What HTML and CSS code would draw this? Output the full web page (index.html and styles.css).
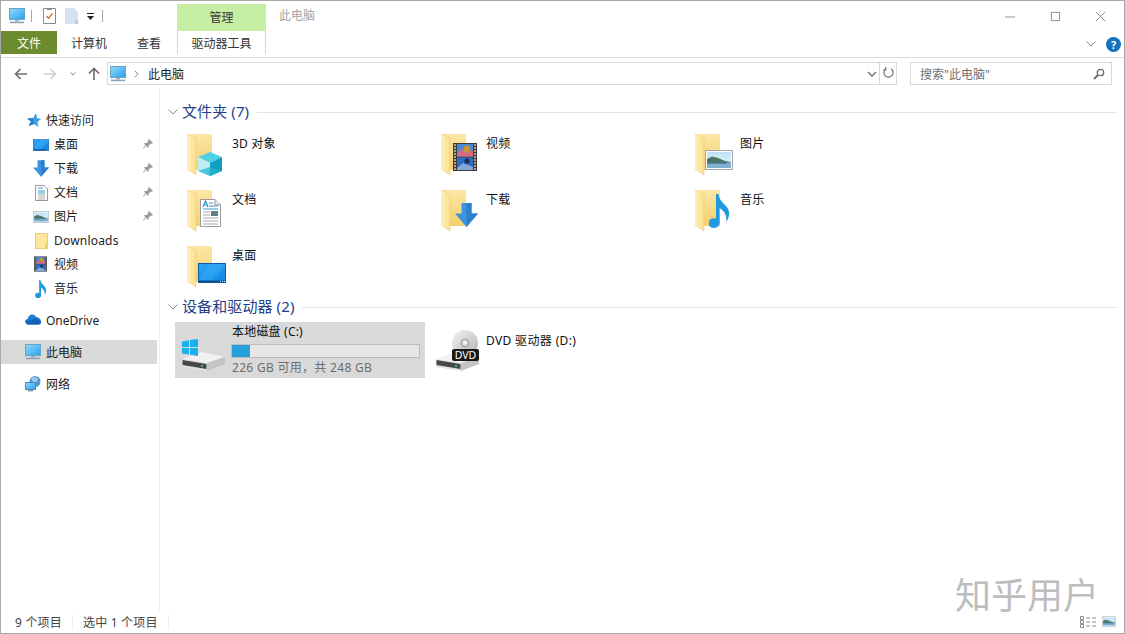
FILE: index.html
```html
<!DOCTYPE html>
<html lang="zh-CN">
<head>
<meta charset="utf-8">
<title>此电脑</title>
<link rel="stylesheet" href="styles.css">
</head>
<body>
<svg class="sprite" aria-hidden="true">
  <defs>
    <linearGradient id="gScreen" x1="0" y1="0" x2="1" y2="1"><stop offset="0" stop-color="#8fdcff"/><stop offset="1" stop-color="#2aa0ea"/></linearGradient>
    <linearGradient id="gDesk" x1="0" y1="0" x2="1" y2="1"><stop offset="0" stop-color="#2aa4f8"/><stop offset="1" stop-color="#0f86e0"/></linearGradient>
    <linearGradient id="gBack" x1="0" y1="0" x2="0" y2="1"><stop offset="0" stop-color="#fbe7a6"/><stop offset="1" stop-color="#f5cf6d"/></linearGradient>
    <linearGradient id="gFront" x1="0" y1="0" x2="1" y2="0"><stop offset="0" stop-color="#fff0b8"/><stop offset="1" stop-color="#fbe08e"/></linearGradient>
    <linearGradient id="gSky" x1="0" y1="0" x2="0" y2="1"><stop offset="0" stop-color="#bfe2f4"/><stop offset="1" stop-color="#e7f4fa"/></linearGradient>
    <linearGradient id="gDisc" x1="0" y1="0" x2="1" y2="1"><stop offset="0" stop-color="#f4f4f4"/><stop offset="1" stop-color="#b5b5b5"/></linearGradient>

    <symbol id="pc" viewBox="0 0 16 16">
      <rect x="0.5" y="0.5" width="15" height="11" fill="url(#gScreen)" stroke="#6aa3c4"/>
      <rect x="6" y="12" width="4" height="1.4" fill="#9ab4c4"/>
      <rect x="1" y="13.6" width="14" height="1.6" fill="#8aa2b2"/>
    </symbol>
    <symbol id="folder" viewBox="0 0 26 41">
      <rect x="0" y="0" width="25" height="36" fill="url(#gBack)"/>
      <path d="M0 0 L9 4 V41 L3 37 H0 Z" fill="url(#gFront)"/>
      <path d="M0 0 L9 4 V41 L3 37" fill="none" stroke="#eccb7a" stroke-width="0.6"/>
    </symbol>
    <symbol id="smallfolder" viewBox="0 0 13 16">
      <rect x="0.5" y="0.5" width="12" height="15" fill="#fde79c" stroke="#e8cb7c"/>
      <rect x="10" y="10" width="2.5" height="5.5" fill="#f5d06f"/>
    </symbol>
    <symbol id="cube" viewBox="0 0 24 24">
      <path d="M12 0 L24 5 L12 11 L0 5 Z" fill="#4fd1e4"/>
      <path d="M0 5 L12 11 V24 L0 19 Z" fill="#bdeef3"/>
      <path d="M12 11 L24 5 V19 L12 24 Z" fill="#0f9dc0"/>
      <path d="M0 19 L12 15 L24 19 L12 24 Z" fill="#29b3cf" opacity=".75"/>
    </symbol>
    <symbol id="doc" viewBox="0 0 21 28">
      <path d="M0.5 0.5 H15 L20.5 6 V27.5 H0.5 Z" fill="#fff" stroke="#9a9a9a"/>
      <path d="M15 0.5 V6 H20.5" fill="#e6e6e6" stroke="#9a9a9a"/>
      <path d="M3 8 L5.5 2 L8 8 M4 6 H7" fill="none" stroke="#2a8fc4" stroke-width="1.2"/>
      <path d="M9 4 H13 M9 7 H18 M3 10 H18" stroke="#3c9cc8" stroke-width="1"/>
      <rect x="11" y="12" width="7" height="5" fill="#5e7f8c"/>
      <path d="M3 13 H10 M3 16 H10 M3 19 H18 M3 22 H18 M3 25 H18" stroke="#a9a9a9" stroke-width="1"/>
    </symbol>
    <symbol id="doc-small" viewBox="0 0 13 16">
      <path d="M0.5 0.5 H9 L12.5 4 V15.5 H0.5 Z" fill="#fff" stroke="#9a9a9a"/>
      <path d="M3 3 H8 M3 6 H10 M3 8 H10" stroke="#3c9cc8"/>
      <path d="M3 10 H10 M3 12 H10 M3 14 H10" stroke="#9c9c9c" stroke-width=".8"/>
    </symbol>
    <symbol id="desk" viewBox="0 0 28 20">
      <rect x="0.5" y="0.5" width="27" height="19" fill="url(#gDesk)" stroke="#0d5ea3"/>
      <rect x="1" y="17.6" width="26" height="1.9" fill="#0b4d8a"/>
      <path d="M22 18.5 H27" stroke="#cfe8ff" stroke-dasharray="1 1"/>
      <path d="M1 17 L12 1 H27 V4 L14 17 Z" fill="#49b6ff" opacity=".35"/>
    </symbol>
    <symbol id="film" viewBox="0 0 24 28">
      <rect width="24" height="28" fill="#3b3b3b"/>
      <rect x="4" y="1" width="16" height="12.5" fill="#4a88d8"/>
      <rect x="4" y="14.5" width="16" height="12.5" fill="#2f6cc8"/>
      <path d="M4 11 L9 6 L14 10 L20 7 V13.5 H4 Z" fill="#d96a80"/>
      <circle cx="14" cy="6" r="3.4" fill="#c69a2f"/>
      <path d="M4 25 L10 20 L20 24 V27 H4 Z" fill="#86a8d8"/>
      <circle cx="14" cy="18" r="2.6" fill="#1e2f55"/>
      <path d="M1 2 H3 M1 5 H3 M1 8 H3 M1 11 H3 M1 14 H3 M1 17 H3 M1 20 H3 M1 23 H3 M1 26 H3 M21 2 H23 M21 5 H23 M21 8 H23 M21 11 H23 M21 14 H23 M21 17 H23 M21 20 H23 M21 23 H23 M21 26 H23" stroke="#d8c998" stroke-width="1.4"/>
    </symbol>
    <symbol id="pic" viewBox="0 0 28 20">
      <rect x="0.5" y="0.5" width="27" height="19" fill="#fff" stroke="#9aa5ab"/>
      <rect x="2" y="2" width="24" height="16" fill="url(#gSky)"/>
      <path d="M2 9 L7 6.5 L13 8 L20 11 L26 12 V13 H2 Z" fill="#4c7568"/>
      <rect x="2" y="12.5" width="24" height="5.5" fill="#7fb0d0"/>
      <path d="M2 13 H22" stroke="#2f5b6e"/>
    </symbol>
    <symbol id="dl" viewBox="0 0 23 24">
      <path d="M6.5 0 H16.5 V10.5 H23 L11.5 24 L0 10.5 H6.5 Z" fill="#3c93e0"/>
      <path d="M11.5 0 H16.5 V10.5 H23 L11.5 24 Z" fill="#2d7fcc"/>
    </symbol>
    <symbol id="note" viewBox="0 0 21 34">
      <path d="M7 29 C7 33 2 35 0.6 32 C-0.6 29 2.5 25 7 25 V0 H9.5 C10 5 13 8 17 12 C21.5 17 21 23 17 28 C18 23 17 18 10.5 14 V28 C10.5 31 8 34 4 34 Z" fill="#1f9adf"/>
      <ellipse cx="5" cy="29" rx="5.5" ry="4.8" fill="#1f9adf"/>
    </symbol>
    <symbol id="star" viewBox="0 0 14 14">
      <path d="M9 0 L10 5 L14 6 L10.5 9 L11.5 14 L7 11 L1.5 13 L4 8.5 L0 5.5 L6 5.2 Z" fill="#3c9fe8"/>
      <path d="M0 5.5 L4 8.5 L1.5 13 L7 11 L6 5.2 Z" fill="#1f7fc9"/>
    </symbol>
    <symbol id="cloud" viewBox="0 0 16 11">
      <path d="M3.5 10.5 C1.2 10.5 0 9 0 7.6 C0 6 1.2 4.9 2.7 4.9 C3.2 2.2 5 .6 7.2 .6 C9 .6 10.4 1.6 11 3 C13.6 3 16 5.2 16 8 C16 9.4 15 10.5 13.6 10.5 Z" fill="#1c7ccf"/>
      <path d="M3.5 10.5 C2 10.5 1.2 9.5 1.6 8.4 C2.4 6.6 4.6 5.8 6.8 6.4 C8.2 4.8 10.8 4.4 12.8 5.4 C14.6 6.2 16 7 16 8 C16 9.4 15 10.5 13.6 10.5 Z" fill="#0f63b5"/>
    </symbol>
    <symbol id="net" viewBox="0 0 16 16">
      <circle cx="10" cy="5.5" r="5.5" fill="#4e96d4"/>
      <path d="M6 2 C8 1 11 1 13 2.5 L12 6 L8 6 Z" fill="#9bc9ea"/>
      <rect x="0.5" y="6.5" width="10" height="7" fill="url(#gScreen)" stroke="#4f88b0"/>
      <rect x="3" y="14" width="5" height="1.4" fill="#7f9db0"/>
    </symbol>
    <symbol id="pin" viewBox="0 0 10 10">
      <path d="M6 0 L10 4 L8.6 4.8 L7.6 4.4 L5.6 6.4 L5.8 8 L5 8.8 L3.2 7 L0.6 9.6 L0 9 L2.6 6.4 L0.9 4.7 L1.8 3.9 L3.4 4.2 L5.4 2.2 L5.1 1 Z" fill="#9a9a9a"/>
    </symbol>
    <symbol id="tray-check" viewBox="0 0 13 16">
      <path d="M0.5 0.5 H12.5 V15.5 H0.5 Z" fill="#fff" stroke="#8a8a8a"/>
      <rect x="4" y="0" width="5" height="2" fill="#8a8a8a"/>
      <path d="M3.5 8 L5.6 10.4 L9.5 5.4" fill="none" stroke="#d85a1e" stroke-width="1.2"/>
    </symbol>
    <symbol id="tray-blank" viewBox="0 0 13 16">
      <path d="M0 0 H9 L13 4 V16 H0 Z" fill="#d5e2f2"/>
      <path d="M10 12 H13 V16 H10 Z" fill="#bccde2"/>
    </symbol>
    <symbol id="drive-body" viewBox="0 0 43 20">
      <path d="M0 8 L20 1 L43 6 L25 12 Z" fill="#f2f2f2"/>
      <path d="M0 8 L25 12 V20 L0 16 Z" fill="#e0e0e0"/>
      <path d="M0.5 9 L24.5 13 V18 L0.5 14 Z" fill="#474747"/>
      <path d="M25 12 L43 6 V13 L25 20 Z" fill="#c4c4c4"/>
      <rect x="19" y="14" width="2" height="2" fill="#38c24a"/>
    </symbol>
    <symbol id="win" viewBox="0 0 16 17">
      <path d="M0 2.4 L7 1.2 V8 H0 Z M8 1 L16 0 V8 H8 Z M0 9 H7 V15.4 L0 14.4 Z M8 9 H16 V17 L8 15.8 Z" fill="#19b0ef"/>
    </symbol>
  </defs>
</svg>

<div class="window">
  <header class="titlebar">
    <div class="qat">
      <svg class="qat-pc"><use href="#pc"/></svg>
      <span class="qat-sep"></span>
      <svg class="qat-doc"><use href="#tray-check"/></svg>
      <svg class="qat-doc qat-blank"><use href="#tray-blank"/></svg>
      <svg class="qat-drop" viewBox="0 0 7 7"><path class="fill-dark" d="M0 0 H7 V1 H0 Z M0 3 H7 L3.5 7 Z"/></svg>
      <span class="qat-sep qat-sep-end"></span>
    </div>
    <div class="ctx-tab">管理</div>
    <div class="title">此电脑</div>
    <div class="win-btns">
      <svg class="win-btn" viewBox="0 0 12 12"><path class="line" d="M0 6.5 H11"/></svg>
      <svg class="win-btn" viewBox="0 0 12 12"><rect class="line" x="1.5" y="1.5" width="9" height="9"/></svg>
      <svg class="win-btn" viewBox="0 0 12 12"><path class="line" d="M1 1 L11 11 M11 1 L1 11"/></svg>
    </div>
  </header>

  <nav class="ribbon">
    <div class="tab tab-file">文件</div>
    <div class="tab tab-pc">计算机</div>
    <div class="tab tab-view">查看</div>
    <div class="tab tab-tool">驱动器工具</div>
    <div class="ribbon-end">
      <svg class="rb-chev" viewBox="0 0 10 6"><path class="line" d="M0.5 0.5 L5 5 L9.5 0.5"/></svg>
      <div class="help">?</div>
    </div>
  </nav>

  <div class="navbar">
    <svg class="nav-ic nav-back" viewBox="0 0 14 12"><path class="arrow" d="M13 6 H2 M6.5 1 L1.5 6 L6.5 11"/></svg>
    <svg class="nav-ic nav-fwd" viewBox="0 0 14 12"><path class="arrow arrow-off" d="M1 6 H12 M7.5 1 L12.5 6 L7.5 11"/></svg>
    <svg class="nav-down" viewBox="0 0 6 4"><path class="arrow-thin" d="M0.5 0.5 L3 3 L5.5 0.5"/></svg>
    <svg class="nav-ic nav-up" viewBox="0 0 12 14"><path class="arrow" d="M6 13 V2 M1 6.5 L6 1.5 L11 6.5"/></svg>
    <div class="addr">
      <svg class="addr-pc"><use href="#pc"/></svg>
      <svg class="addr-sep" viewBox="0 0 5 8"><path class="arrow-thin" d="M1 1 L4 4 L1 7"/></svg>
      <span class="addr-text">此电脑</span>
      <svg class="addr-drop" viewBox="0 0 10 6"><path class="arrow-mid" d="M1 1 L5 5 L9 1"/></svg>
      <div class="addr-refresh">
        <svg class="refresh" viewBox="0 0 12 14"><path class="arrow-mid" d="M3 2 A5 5 0 1 0 9 2 M3 0 V3 H0.5"/></svg>
      </div>
    </div>
    <div class="search">
      <span>搜索"此电脑"</span>
      <svg class="search-ic" viewBox="0 0 12 12"><circle class="glass" cx="7.5" cy="4.5" r="3.2"/><path class="glass-h" d="M5 7 L1 11"/></svg>
    </div>
  </div>

  <main class="main">
    <aside class="side">
      <div class="side-row side-top"><svg class="si si-star"><use href="#star"/></svg>快速访问</div>
      <div class="side-row side-sub"><svg class="si si-desk"><use href="#desk"/></svg>桌面<svg class="pin"><use href="#pin"/></svg></div>
      <div class="side-row side-sub"><svg class="si si-dl"><use href="#dl"/></svg>下载<svg class="pin"><use href="#pin"/></svg></div>
      <div class="side-row side-sub"><svg class="si si-doc"><use href="#doc-small"/></svg>文档<svg class="pin"><use href="#pin"/></svg></div>
      <div class="side-row side-sub"><svg class="si si-pic"><use href="#pic"/></svg>图片<svg class="pin"><use href="#pin"/></svg></div>
      <div class="side-row side-sub side-latin"><svg class="si si-doc"><use href="#smallfolder"/></svg>Downloads</div>
      <div class="side-row side-sub"><svg class="si si-film"><use href="#film"/></svg>视频</div>
      <div class="side-row side-sub"><svg class="si si-note"><use href="#note"/></svg>音乐</div>
      <div class="side-row side-top side-gap"><svg class="si si-cloud"><use href="#cloud"/></svg>OneDrive</div>
      <div class="side-row side-top side-gap side-sel"><svg class="si si-pc"><use href="#pc"/></svg>此电脑</div>
      <div class="side-row side-top side-gap"><svg class="si si-pc"><use href="#net"/></svg>网络</div>
    </aside>

    <section class="content">
      <div class="group"><svg class="chev" viewBox="0 0 10 6"><path class="line" d="M0.5 0.5 L5 5 L9.5 0.5"/></svg><span class="group-name">文件夹 (7)</span><span class="rule"></span></div>
      <div class="tiles">
        <div class="tile"><svg class="ico" viewBox="0 0 48 48"><use href="#folder" x="6" y="4" width="26" height="41"/><use href="#cube" x="17" y="22" width="24" height="24"/></svg><span class="name">3D 对象</span></div>
        <div class="tile"><svg class="ico" viewBox="0 0 48 48"><use href="#folder" x="6" y="4" width="26" height="41"/><use href="#film" x="18" y="13" width="24" height="28"/></svg><span class="name">视频</span></div>
        <div class="tile"><svg class="ico" viewBox="0 0 48 48"><use href="#folder" x="6" y="4" width="26" height="41"/><use href="#pic" x="16" y="20" width="28" height="20"/></svg><span class="name">图片</span></div>
        <div class="tile"><svg class="ico" viewBox="0 0 48 48"><use href="#folder" x="6" y="4" width="26" height="41"/><use href="#doc" x="19" y="13" width="21" height="28"/></svg><span class="name">文档</span></div>
        <div class="tile"><svg class="ico" viewBox="0 0 48 48"><use href="#folder" x="6" y="4" width="26" height="41"/><use href="#dl" x="20" y="17" width="23" height="24"/></svg><span class="name">下载</span></div>
        <div class="tile"><svg class="ico" viewBox="0 0 48 48"><use href="#folder" x="6" y="4" width="26" height="41"/><use href="#note" x="20" y="8" width="21" height="34"/></svg><span class="name">音乐</span></div>
        <div class="tile"><svg class="ico" viewBox="0 0 48 48"><use href="#folder" x="6" y="4" width="26" height="41"/><use href="#desk" x="17" y="21" width="28" height="20"/></svg><span class="name">桌面</span></div>
      </div>

      <div class="group group-2"><svg class="chev" viewBox="0 0 10 6"><path class="line" d="M0.5 0.5 L5 5 L9.5 0.5"/></svg><span class="group-name">设备和驱动器 (2)</span><span class="rule"></span></div>
      <div class="tiles">
        <div class="tile tile-sel">
          <svg class="ico" viewBox="0 0 48 48"><use href="#drive-body" x="1" y="25" width="43" height="20"/><use href="#win" x="1" y="13" width="16" height="17"/></svg>
          <div class="drive-info">
            <div class="name-drive">本地磁盘 (C:)</div>
            <div class="bar"><div class="bar-fill" style="width:9.5%"></div></div>
            <div class="sub">226 GB 可用，共 248 GB</div>
          </div>
        </div>
        <div class="tile">
          <svg class="ico" viewBox="0 0 48 48">
            <circle cx="30" cy="17" r="13" fill="url(#gDisc)"/><circle cx="30" cy="17" r="4" fill="none" stroke="#9a9a9a"/><circle cx="30" cy="17" r="1.5" fill="#fff"/>
            <use href="#drive-body" x="1" y="25" width="43" height="20"/>
            <rect x="17" y="23" width="27" height="12" rx="2" fill="#1a1a1a"/>
            <text class="dvd" x="30.5" y="33" text-anchor="middle">DVD</text>
          </svg>
          <span class="name name-dvd">DVD 驱动器 (D:)</span>
        </div>
      </div>
    </section>
  </main>

  <footer class="status">
    <span class="st st-a">9 个项目</span>
    <span class="st-div"></span>
    <span class="st st-b">选中 1 个项目</span>
    <span class="st-div"></span>
    <span class="st-views">
      <svg class="view" viewBox="0 0 16 12"><path class="view-line" d="M.5 .5 H3.5 V3.5 H.5 Z M.5 4.5 H3.5 V7.5 H.5 Z M.5 8.5 H3.5 V11.5 H.5 Z M6 2 H10 M12 2 H16 M6 6 H10 M12 6 H16 M6 10 H10 M12 10 H16"/></svg>
      <svg class="view view-pic"><use href="#pic"/></svg>
    </span>
  </footer>

  <div class="watermark">知乎用户</div>
</div>
</body>
</html>
```

FILE: styles.css
```css
* { box-sizing: border-box; }
html, body { margin: 0; padding: 0; width: 1125px; height: 634px; overflow: hidden; background: #fff; }
body { font-family: "Noto Sans", "Noto Sans CJK SC", sans-serif; font-size: 12px; color: #222; }
.sprite { position: absolute; width: 0; height: 0; }
.line { fill: none; stroke: #8a8a8a; stroke-width: 1; }
.fill-dark { fill: #222; }

.window { position: relative; width: 1125px; height: 634px; border: 1px solid #a8a8a8; display: flex; flex-direction: column; background: #fff; }

/* title bar */
.titlebar { height: 30px; display: flex; flex: none; }
.qat { width: 176px; display: flex; align-items: center; padding-left: 8px; }
.qat-pc { width: 16px; height: 16px; }
.qat-sep { width: 1px; height: 12px; background: #a8a8a8; margin-left: 6px; }
.qat-doc { width: 13px; height: 16px; margin-left: 11px; }
.qat-blank { margin-left: 9px; }
.qat-drop { width: 7px; height: 7px; margin-left: 9px; }
.qat-sep-end { margin-left: 8px; }
.ctx-tab { width: 89px; height: 27px; margin-top: 3px; background: #c6eea4; color: #3a3a3a; display: flex; align-items: center; justify-content: center; line-height: 1; padding-top: 1px; }
.title { margin-left: 13px; line-height: 30px; color: #a4a4a4; }
.win-btns { margin-left: auto; display: flex; align-items: center; padding-right: 18px; gap: 34px; }
.win-btn { width: 11px; height: 11px; }

/* ribbon */
.ribbon { height: 27px; flex: none; display: flex; border-bottom: 1px solid #dcdcdc; }
.tab { height: 23px; display: flex; align-items: center; justify-content: center; color: #333; }
.tab-file { width: 56px; background: #6c8a2e; color: #fff; }
.tab-pc { width: 64px; }
.tab-view { width: 56px; }
.tab-tool { width: 89px; border-left: 1px solid #d6d6d6; border-right: 1px solid #d6d6d6; }
.ribbon-end { margin-left: auto; display: flex; align-items: flex-start; padding-top: 6px; padding-right: 3px; gap: 10px; }
.rb-chev { width: 10px; height: 6px; margin-top: 4px; }
.help { width: 15px; height: 15px; border-radius: 50%; background: #1671bb; color: #fff; font-weight: 700; font-size: 11px; line-height: 15px; text-align: center; }

/* navigation */
.navbar { height: 30px; flex: none; display: flex; align-items: center; padding-top: 1px; }
.nav-ic { flex: none; }
.nav-back { width: 14px; height: 12px; margin-left: 13px; }
.nav-fwd { width: 14px; height: 12px; margin-left: 15px; }
.nav-down { width: 6px; height: 4px; margin-left: 13px; }
.nav-up { width: 12px; height: 14px; margin-left: 12px; }
.arrow { fill: none; stroke: #6d6d6d; stroke-width: 1.6; }
.arrow-off { stroke: #cfcfcf; }
.arrow-thin { fill: none; stroke: #8c8c8c; stroke-width: 1; }
.arrow-mid { fill: none; stroke: #6d6d6d; stroke-width: 1.3; }
.addr { width: 790px; height: 23px; margin-left: 7px; border: 1px solid #d9d9d9; display: flex; align-items: center; padding-left: 2px; }
.addr-pc { width: 16px; height: 16px; }
.addr-sep { width: 5px; height: 8px; margin-left: 8px; }
.addr-text { margin-left: 9px; color: #222; }
.addr-drop { width: 10px; height: 6px; margin-left: auto; margin-right: 2px; }
.addr-refresh { width: 17px; height: 21px; border-left: 1px solid #d9d9d9; display: flex; align-items: center; justify-content: center; }
.refresh { width: 11px; height: 13px; }
.search { width: 202px; height: 23px; margin-left: 13px; border: 1px solid #d9d9d9; display: flex; align-items: center; padding: 0 6px 0 9px; color: #6f6f6f; }
.search-ic { width: 12px; height: 12px; margin-left: auto; }
.glass { fill: none; stroke: #6a6a6a; stroke-width: 1.3; }
.glass-h { fill: none; stroke: #6a6a6a; stroke-width: 2; }

/* main */
.main { flex: 1; min-height: 0; display: flex; }
.side { width: 159px; flex: none; padding: 20px 2px 0 0; border-right: 1px solid #f0f0f0; }
.side-row { height: 24px; display: flex; align-items: center; position: relative; color: #222; }
.side-top { padding-left: 45px; }
.side-sub { padding-left: 53px; }
.side-latin { letter-spacing: .2px; }
.side-gap { margin-top: 8px; }
.side-sel { background: #d9d9d9; }
.si { position: absolute; }
.si-star { left: 26px; top: 5px; width: 14px; height: 14px; }
.si-desk { left: 32px; top: 6px; width: 16px; height: 14px; }
.si-dl { left: 32px; top: 4px; width: 16px; height: 17px; }
.si-doc { left: 34px; top: 5px; width: 13px; height: 16px; }
.si-pic { left: 32px; top: 7px; width: 16px; height: 12px; }
.si-film { left: 33px; top: 4px; width: 13px; height: 16px; }
.si-note { left: 34px; top: 4px; width: 12px; height: 18px; }
.si-cloud { left: 24px; top: 6px; width: 16px; height: 11px; }
.si-pc { left: 24px; top: 4px; width: 16px; height: 16px; }
.pin { position: absolute; left: 142px; top: 7px; width: 10px; height: 10px; }

.content { flex: 1; min-width: 0; padding: 12px 7px 0 8px; }
.group { height: 24px; display: flex; align-items: center; }
.group-2 { margin-top: 1px; }
.chev { width: 10px; height: 6px; flex: none; }
.group-name { margin: 0 0 4px 4px; font-size: 15px; color: #24408a; white-space: nowrap; letter-spacing: .1px; }
.rule { flex: 1; height: 1px; background: #e4e4e4; margin-left: 8px; }
.tiles { display: grid; grid-template-columns: repeat(3, 250px); column-gap: 4px; grid-auto-rows: 56px; margin: 2px 0 0 7px; }
.group-2 + .tiles { margin-top: 3px; }
.tile { display: flex; padding-left: 6px; }
.tile-sel { background: #d9d9d9; }
.ico { width: 48px; height: 48px; flex: none; margin-top: 4px; }
.name { margin: 9px 0 0 3px; color: #111; line-height: 18px; letter-spacing: .2px; }
.name-dvd { margin-top: 10px; letter-spacing: .35px; }
.drive-info { margin-left: 3px; width: 188px; padding-top: 1px; }
.name-drive { line-height: 18px; color: #111; letter-spacing: .2px; }
.bar { height: 14px; margin: 3px 0 0 -1px; border: 1px solid #bcbcbc; background: #e6e6e6; }
.bar-fill { height: 100%; background: #26a0da; }
.sub { margin-top: 1px; line-height: 18px; color: #6d6d6d; letter-spacing: .3px; }
.dvd { font-size: 10.5px; fill: #fff; font-family: "Noto Sans", sans-serif; }

/* status */
.status { height: 21px; flex: none; display: flex; align-items: center; color: #444; padding-bottom: 2px; }
.st { letter-spacing: .2px; }
.st-a { margin-left: 14px; }
.st-b { margin-left: 10px; }
.st-div { width: 1px; height: 14px; background: #f0f0f0; margin-left: 10px; }
.st-views { margin-left: auto; display: flex; align-items: center; gap: 6px; padding-right: 8px; }
.view { width: 16px; height: 12px; }
.view-pic { width: 14px; height: 11px; }
.view-line { fill: none; stroke: #8a8a8a; stroke-width: 1; }

.watermark { position: absolute; right: 25px; bottom: 15px; font-size: 36px; line-height: 44px; color: #bdbdbd; }
```
